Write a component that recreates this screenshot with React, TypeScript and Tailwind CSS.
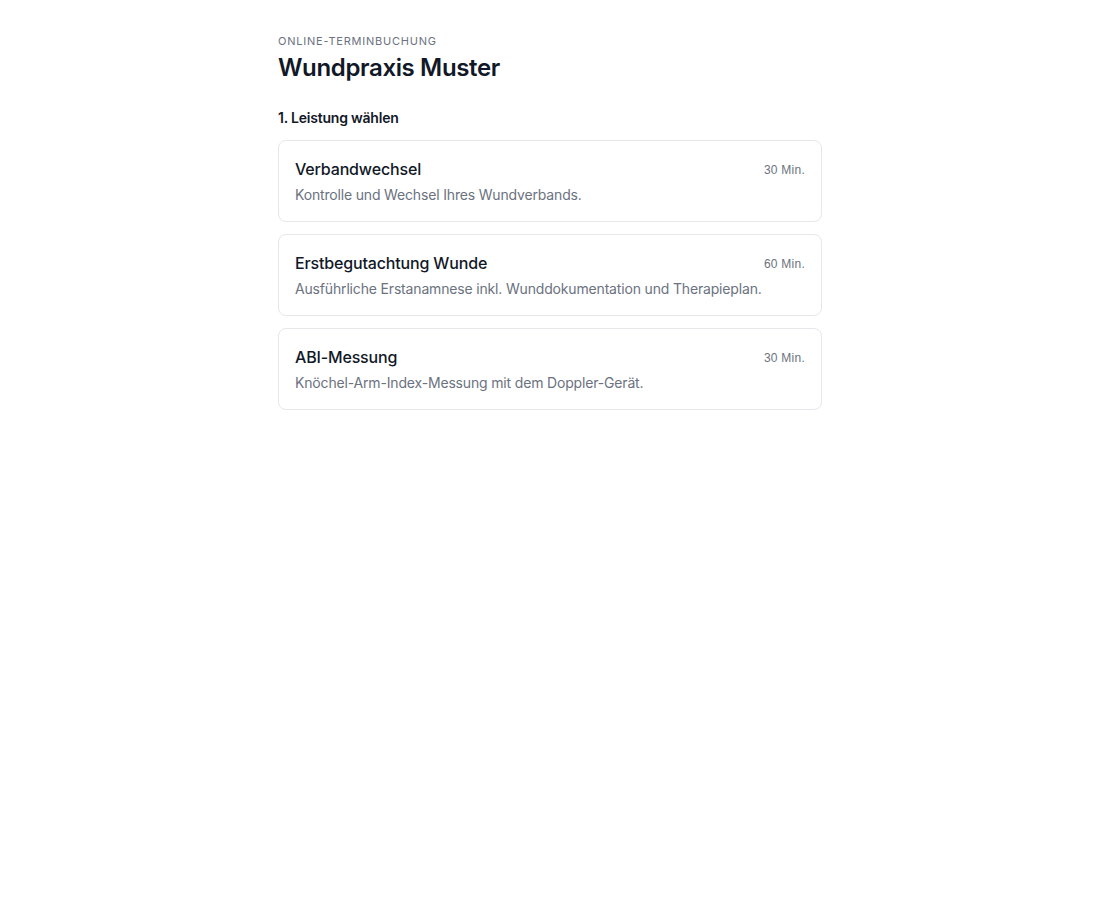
const services = [
  {
    name: "Verbandwechsel",
    duration: "30 Min.",
    description: "Kontrolle und Wechsel Ihres Wundverbands.",
  },
  {
    name: "Erstbegutachtung Wunde",
    duration: "60 Min.",
    description: "Ausführliche Erstanamnese inkl. Wunddokumentation und Therapieplan.",
  },
  {
    name: "ABI-Messung",
    duration: "30 Min.",
    description: "Knöchel-Arm-Index-Messung mit dem Doppler-Gerät.",
  },
];

export default function App() {
  return (
    <main
      className="min-h-screen bg-white text-[#111827]"
      style={{ fontFamily: "Inter, 'Noto Sans', sans-serif" }}
    >
      <div className="mx-auto w-full max-w-[544px] pt-[33px]">
        <p className="text-[11px] leading-4 uppercase tracking-[0.07em] text-[#6b7280]">
          Online-Terminbuchung
        </p>
        <h1 className="mt-[3px] text-2xl leading-8 font-semibold tracking-[-0.015em]">
          Wundpraxis Muster
        </h1>

        <h2 className="mt-6 text-sm leading-5 font-semibold tracking-[-0.015em]">
          1. Leistung wählen
        </h2>

        <div className="mt-3 flex flex-col gap-3">
          {services.map((s) => (
            <button
              key={s.name}
              type="button"
              className="w-full rounded-lg border border-[#e5e7eb] bg-white px-4 py-4 text-left hover:border-[#d1d5db] transition-colors"
            >
              <div className="flex items-center justify-between">
                <span className="text-base leading-6 font-medium tracking-[-0.01em]">{s.name}</span>
                <span
                  className="mt-[2px] text-xs leading-4 text-[#6b7280] tracking-[0.02em]"
                  style={{ fontFamily: "'Liberation Sans', Arial, sans-serif" }}
                >
                  {s.duration}
                </span>
              </div>
              <p className="mt-1 text-sm leading-5 text-[#6b7280] tracking-[-0.012em]">
                {s.description}
              </p>
            </button>
          ))}
        </div>
      </div>
    </main>
  );
}
